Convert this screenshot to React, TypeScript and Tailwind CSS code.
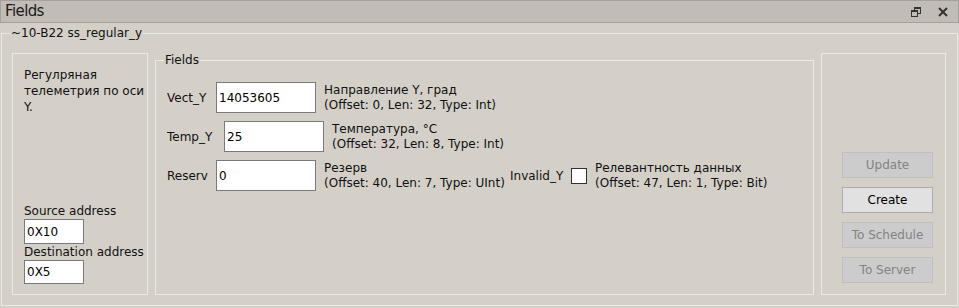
import React from "react";

const font = "font-['DejaVu_Sans',sans-serif]";

function Input({ value, w, h }: { value: string; w: string; h: string }) {
  return (
    <div
      className={`${w} ${h} shrink-0 bg-white border border-[#7a7a7a] flex items-center pl-[2px] text-[12px] text-black`}
    >
      {value}
    </div>
  );
}

function Desc({ a, b, w }: { a: string; b: string; w?: string }) {
  return (
    <div className={`ml-[8px] ${w ?? ""} shrink-0 text-[12px] leading-[15px] whitespace-nowrap`}>
      <div>{a}</div>
      <div>{b}</div>
    </div>
  );
}

function Btn({ label, enabled }: { label: string; enabled?: boolean }) {
  return (
    <div
      className={
        enabled
          ? "w-[91px] h-[26px] flex items-center justify-center bg-[#e1e1e1] border border-[#adadad] text-black text-[12px]"
          : "w-[91px] h-[26px] flex items-center justify-center bg-[#cccccc] border border-[#bfbfbf] text-[#838383] text-[12px]"
      }
    >
      {label}
    </div>
  );
}

export default function App() {
  return (
    <div className={`w-[959px] h-[308px] bg-[#d4d0c8] flex flex-col overflow-hidden ${font} text-[#111]`}>
      {/* title bar */}
      <div className="h-[23px] shrink-0 flex items-center bg-[#c1bdb6] border border-[#a4a19c] pl-[4px] pr-[10px]">
        <span className="text-[15px] tracking-[-0.6px] text-[#1a1a1a]">Fields</span>
        <div className="ml-auto flex items-center gap-[17px]">
          <svg width="10" height="10" viewBox="0 0 10 10">
            <rect x="3.5" y="0.5" width="6" height="6" fill="none" stroke="#333" strokeWidth="1" />
            <rect x="3" y="0" width="7" height="2" fill="#333" />
            <rect x="0.5" y="3.5" width="6" height="6" fill="#c1bdb6" stroke="#333" strokeWidth="1" />
            <rect x="0" y="3" width="7" height="2" fill="#333" />
          </svg>
          <svg width="10" height="10" viewBox="0 0 10 10">
            <path d="M1 1 L9 9 M9 1 L1 9" stroke="#333" strokeWidth="2" />
          </svg>
        </div>
      </div>

      {/* body */}
      <div className="flex-1 flex px-[1px] pt-[4px] pb-[2px] min-h-0">
        <fieldset className="flex-1 min-w-0 flex gap-[7px] border border-[#ebe9e5] pl-[10px] pr-[11px] pt-[13px] pb-[10px]">
          <legend className="ml-[-2px] px-[1px] text-[12px] leading-[13px]">~10-B22 ss_regular_y</legend>

          {/* left panel */}
          <div className="w-[136px] shrink-0 border border-[#ebe9e5] flex flex-col justify-between pt-[13px] pl-[11px] pr-[1px] pb-[10px] text-[12px]">
            <div className="leading-[16px] whitespace-nowrap">
              Регулряная
              <br />
              телеметрия по оси
              <br />
              Y.
            </div>
            <div className="flex flex-col">
              <div className="leading-[15px]">Source address</div>
              <Input value="0X10" w="w-[60px]" h="h-[25px]" />
              <div className="leading-[16px]">Destination address</div>
              <Input value="0X5" w="w-[60px]" h="h-[24px]" />
            </div>
          </div>

          {/* fields group */}
          <fieldset className="flex-1 min-w-0 border border-[#ebe9e5] pl-[11px] pt-[14px] flex flex-col gap-[8px]">
            <legend className="ml-[-3px] px-[1px] text-[12px] leading-[15px]">Fields</legend>

            <div className="flex items-center">
              <div className="w-[49px] shrink-0 text-[12px]">Vect_Y</div>
              <Input value="14053605" w="w-[100px]" h="h-[31px]" />
              <Desc a="Направление Y, град" b="(Offset: 0, Len: 32, Type: Int)" />
            </div>

            <div className="flex items-center">
              <div className="w-[57px] shrink-0 text-[12px]">Temp_Y</div>
              <Input value="25" w="w-[100px]" h="h-[31px]" />
              <Desc a="Температура, °C" b="(Offset: 32, Len: 8, Type: Int)" />
            </div>

            <div className="flex items-center">
              <div className="w-[49px] shrink-0 text-[12px]">Reserv</div>
              <Input value="0" w="w-[100px]" h="h-[31px]" />
              <Desc a="Резерв" b="(Offset: 40, Len: 7, Type: UInt)" w="w-[178px]" />
              <div className="ml-[8px] w-[61px] shrink-0 text-[12px] pt-[1px] whitespace-nowrap">Invalid_Y</div>
              <div className="w-[16px] h-[16px] shrink-0 bg-white border border-[#333]" />
              <Desc a="Релевантность данных" b="(Offset: 47, Len: 1, Type: Bit)" />
            </div>
          </fieldset>

          {/* right panel */}
          <div className="w-[125px] shrink-0 border border-[#ebe9e5] flex flex-col justify-end gap-[9px] pl-[20px] pb-[11px]">
            <Btn label="Update" />
            <Btn label="Create" enabled />
            <Btn label="To Schedule" />
            <Btn label="To Server" />
          </div>
        </fieldset>
      </div>
    </div>
  );
}
